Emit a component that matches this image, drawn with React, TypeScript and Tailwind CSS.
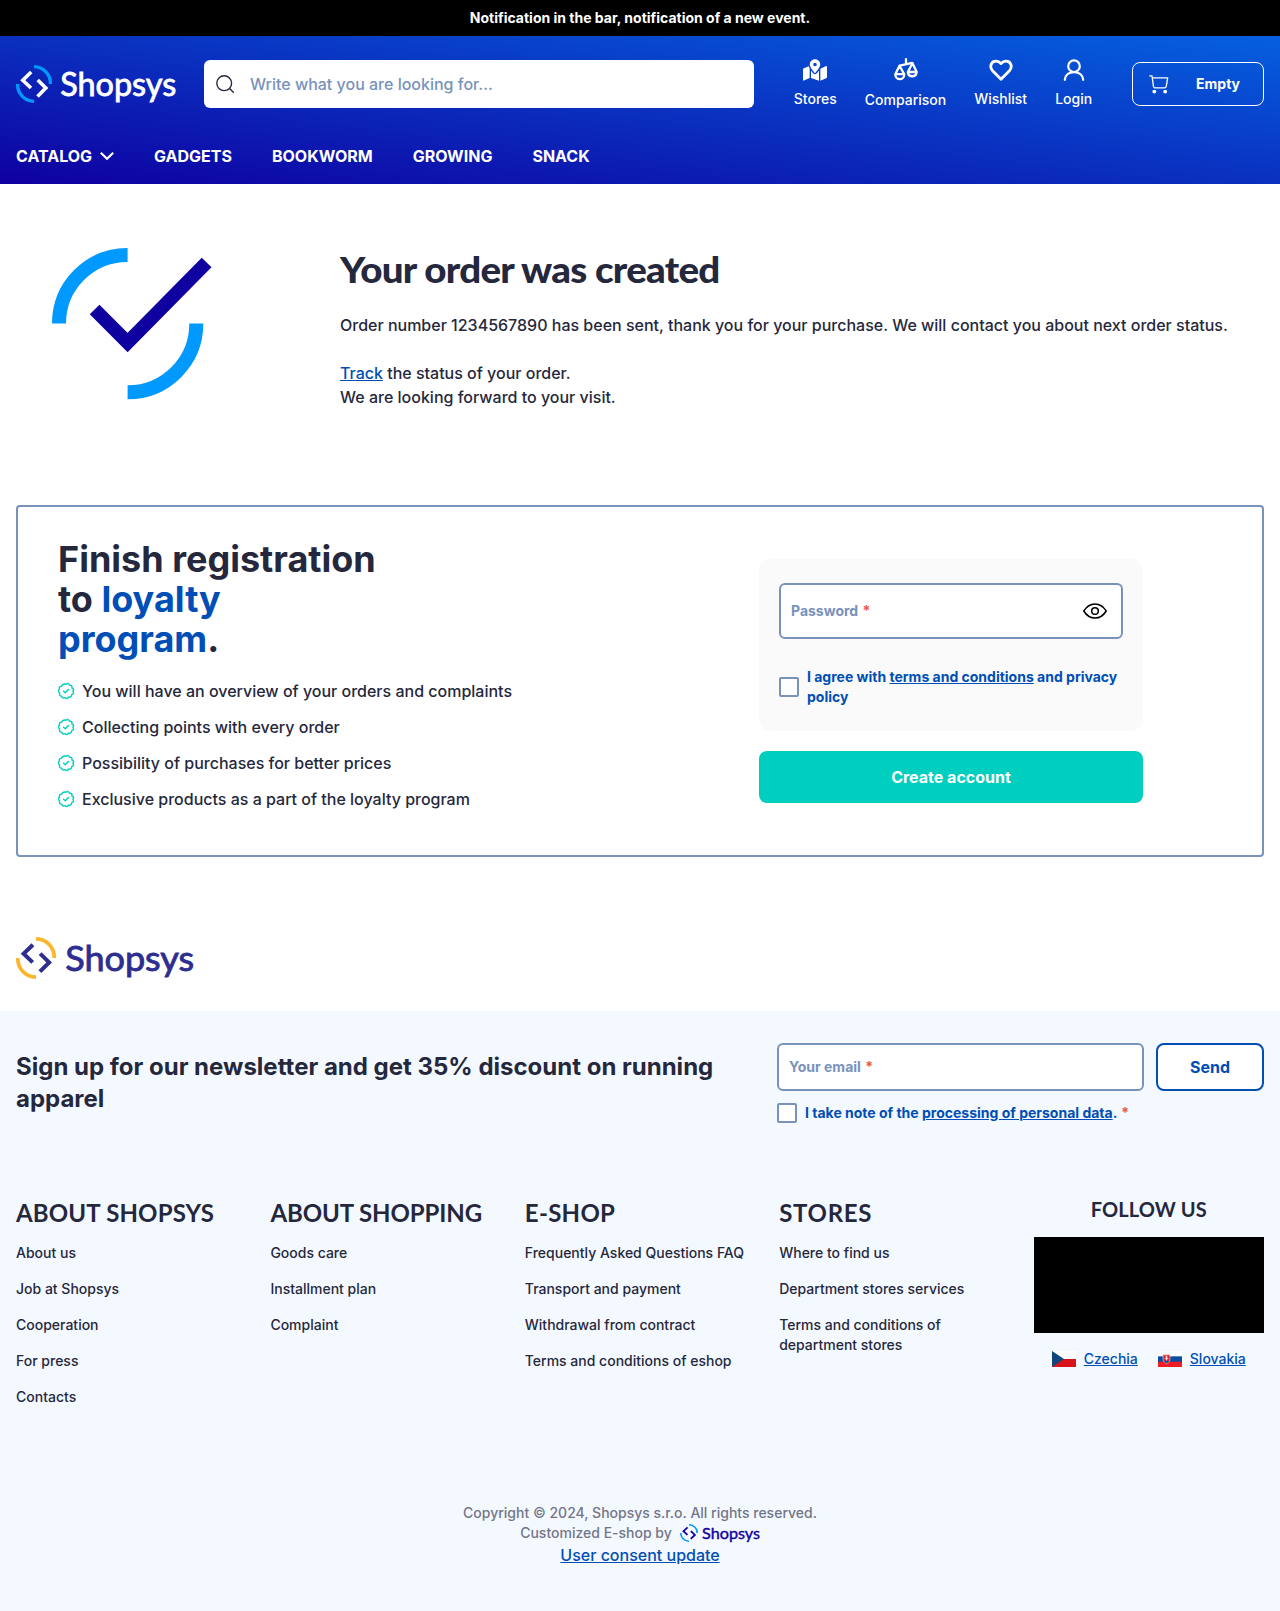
import type { ReactNode } from "react";
import { FaMapMarkedAlt } from "react-icons/fa";

function Logo({ className, arc, ink }: { className: string; arc: string; ink: string }) {
  return (
    <svg className={`overflow-visible ${className}`} viewBox="0 0 160 38" preserveAspectRatio="none" fill="none" aria-label="Shopsys">
      <path d="M18 1.7A16.6 16.6 0 0 1 34.4 19M18 36.3A16.6 16.6 0 0 1 1.6 19" stroke={arc} strokeWidth="3.3" />
      <path d="M15.2 7 6.8 15.2 15 23M21.7 15 29.8 23 21.5 31.4" stroke={ink} strokeWidth="3.6" />
      <text x="44.2" y="30.800" fill={ink} stroke={ink} strokeWidth="0.8" fontFamily="Lato" fontWeight="400" fontSize="32" textLength="116" lengthAdjust="spacingAndGlyphs">Shopsys</text>
    </svg>
  );
}

function ScaleIcon() {
  return (
    <svg className="h-6 w-6" viewBox="0 0 24 24" fill="none" stroke="currentColor" strokeWidth="2.3" strokeLinecap="round" strokeLinejoin="round">
      <path d="M12 1.2V6M5.8 7.6 18.2 4.8" />
      <path d="M5.5 7.8 1.3 16.2A4.5 5 0 0 0 10.3 16.2ZM1.3 16.2H10.3" />
      <path d="M18.5 5.2 13.8 14A4.5 5 0 0 0 22.7 14ZM13.8 14H22.7" />
    </svg>
  );
}

function HeartIcon() {
  return (
    <svg className="h-6 w-6" viewBox="0 0 24 24" fill="none" stroke="currentColor" strokeWidth="2.8" strokeLinejoin="round">
      <path d="M12 21.2 3.6 12.7C0 8.7 2.2 3.2 6.8 3.1 9.4 3 11 4.4 12 5.6 13 4.4 14.6 3 17.2 3.1 21.8 3.2 24 8.7 20.4 12.7Z" />
    </svg>
  );
}

function UserIcon() {
  return (
    <svg className="h-6 w-6" viewBox="0 0 24 24" fill="none" stroke="currentColor" strokeWidth="2.2" strokeLinecap="round">
      <circle cx="12" cy="8.2" r="5.8" />
      <path d="M2.8 21.8C3.2 17 7 14.2 12 14.2S20.8 17 21.2 21.8" />
    </svg>
  );
}

function CartIcon() {
  return (
    <svg className="h-[19px] w-5" viewBox="0 0 20 19" fill="none" stroke="currentColor" strokeWidth="1.3" strokeLinecap="round" strokeLinejoin="round">
      <path d="M.8.9H3L4.5 11.7Q4.8 12.9 6 12.9H15.5Q16.9 12.9 17.2 11.6L18.7 2.8H3.4" />
      <circle cx="5.3" cy="16.6" r="1.3" fill="currentColor" />
      <circle cx="16.2" cy="16.6" r="1.3" fill="currentColor" />
    </svg>
  );
}

function SealIcon() {
  return (
    <svg className="h-4 w-4 shrink-0 overflow-visible" viewBox="0 0 16 16" fill="none" stroke="#00cfbf" strokeWidth="1.4" strokeLinecap="round" strokeLinejoin="round">
      <path d="M8 1.2Q10.4-.6 11.6 2.2 14.6 2 13.9 5 16.7 6.2 14.9 8.2 16.4 10.9 13.6 11.7 13.7 14.7 10.7 14 9 16.5 7.2 14.7 4.3 15.9 3.7 13.2.8 13 1.7 10.1-.7 8.3 1.4 6.3.6 3.4 3.5 3.2 4.4.3 8 1.2Z" />
      <path d="M5.6 8.2 7.3 9.7 10.4 6.5" strokeWidth="1.5" />
    </svg>
  );
}

function HeaderLink({ icon, label, className }: { icon: ReactNode; label: string; className: string }) {
  return (
    <a className={`flex flex-col items-center text-sm font-medium ${className}`} href="#">
      {icon}
      {label}
    </a>
  );
}

const benefits = [
  "You will have an overview of your orders and complaints",
  "Collecting points with every order",
  "Possibility of purchases for better prices",
  "Exclusive products as a part of the loyalty program",
];

const columns = [
  { title: "ABOUT SHOPSYS", tracking: "tracking-[0.16px]", links: ["About us", "Job at Shopsys", "Cooperation", "For press", "Contacts"] },
  { title: "ABOUT SHOPPING", tracking: "tracking-[-0.1px]", links: ["Goods care", "Installment plan", "Complaint"] },
  { title: "E-SHOP", tracking: "tracking-[0.3px]", links: ["Frequently Asked Questions FAQ", "Transport and payment", "Withdrawal from contract", "Terms and conditions of eshop"] },
  { title: "STORES", tracking: "tracking-[0.7px]", links: ["Where to find us", "Department stores services", "Terms and conditions of department stores"] },
];

export default function App() {
  return (
    <div className="flex h-[1611px] flex-col bg-white font-['Inter',sans-serif] text-base font-medium text-[#25283d]">
      <div className="flex h-9 shrink-0 items-center justify-center bg-black text-sm font-bold text-white">
        Notification in the bar, notification of a new event.
      </div>

      <header className="h-[148px] shrink-0 bg-linear-to-tr/srgb from-[#0f00a0] to-[#0560df] px-4 pt-5 text-white">
        <div className="flex h-[56px] items-center">
          <Logo className="h-[38px] w-[160px]" arc="#0099ff" ink="#ffffff" />
          <div className="ml-7 flex h-12 w-[550px] items-center rounded-md bg-white pl-3">
            <svg className="h-[18px] w-[18px]" viewBox="0 0 18 18" fill="none" stroke="#25283d" strokeWidth="1.4" strokeLinecap="round">
              <circle cx="8.2" cy="8.2" r="7.4" />
              <path d="m13.6 13.6 3.7 3.7" />
            </svg>
            <span className="ml-4 text-[#7892bc]">Write what you are looking for...</span>
          </div>
          <nav className="ml-[39.75px] flex gap-7">
            <HeaderLink className="gap-[7px]" icon={<FaMapMarkedAlt className="h-6 w-6" />} label="Stores" />
            <HeaderLink className="gap-2" icon={<ScaleIcon />} label="Comparison" />
            <HeaderLink className="gap-[7px]" icon={<HeartIcon />} label="Wishlist" />
            <HeaderLink className="gap-[7px]" icon={<UserIcon />} label="Login" />
          </nav>
          <div className="ml-auto flex h-11 w-[132px] items-center rounded-lg border border-white pr-[23px] pl-4">
            <CartIcon />
            <span className="ml-auto text-sm font-bold">Empty</span>
          </div>
        </div>
        <nav className="mt-8 flex h-6 items-center gap-10 font-bold">
          <span className="flex items-center gap-2">
            CATALOG
            <svg className="h-2 w-[14px]" viewBox="0 0 14 8" fill="none" stroke="currentColor" strokeWidth="2.2">
              <path d="m.8.8 6.2 6 6.2-6" />
            </svg>
          </span>
          <span>GADGETS</span>
          <span>BOOKWORM</span>
          <span>GROWING</span>
          <span>SNACK</span>
        </nav>
      </header>

      <section className="flex h-[321px] shrink-0 pt-16 pl-[52px]">
        <svg className="h-[152px] w-[160px] shrink-0" viewBox="0 0 160 152" fill="none" strokeWidth="14">
          <path d="M75.6 7A68.5 68.5 0 0 0 7 75.6M75.6 144.3A68.5 68.5 0 0 0 144.3 75.6" stroke="#0099ff" />
          <path d="m42.6 61.5 33 33 79-80" stroke="#0f00a0" strokeWidth="13.7" />
        </svg>
        <div className="ml-32">
          <h1 className="-mt-[2px] w-fit origin-left scale-x-[1.07] font-['Lato'] text-[36px] leading-[46px] font-black tracking-[-0.68px]">Your order was created</h1>
          <p className="mt-[21px] leading-6">Order number 1234567890 has been sent, thank you for your purchase. We will contact you about next order status.</p>
          <p className="mt-6 leading-6">
            <a className="text-[#004eb6] underline" href="#">Track</a> the status of your order.
            <br />
            We are looking forward to your visit.
          </p>
        </div>
      </section>

      <section className="mx-4 flex h-[352px] shrink-0 rounded border-2 border-[#7892bc] pl-10">
        <div className="w-[701px] pt-8">
          <h2 className="w-[330px] text-[36px] leading-10 font-bold">
            Finish registration to <span className="text-[#004eb6]">loyalty program</span>.
          </h2>
          <ul className="mt-5 flex flex-col gap-3">
            {benefits.map((b) => (
              <li key={b} className="flex h-6 items-center gap-2">
                <SealIcon />
                {b}
              </li>
            ))}
          </ul>
        </div>
        <form className="w-96 pt-[52px]">
          <div className="rounded-xl bg-[#fafafa] px-5 py-6">
            <div className="flex h-14 items-center justify-between rounded-md border-2 border-[#7892bc] bg-white pr-[14px] pl-[10px]">
              <span className="text-sm font-bold text-[#7892bc]">
                Password <span className="ml-px text-[#ec5353]">*</span>
              </span>
              <svg className="h-4 w-6" viewBox="0 0 24 16" fill="none" stroke="#000" strokeWidth="1.5" strokeLinejoin="round">
                <path d="M.8 8C3.5 3.6 7.3.9 12 .9S20.5 3.6 23.2 8C20.5 12.4 16.7 15.1 12 15.1S3.5 12.4.8 8Z" />
                <circle cx="12" cy="8" r="3.3" />
              </svg>
            </div>
            <div className="mt-7 flex items-center gap-2">
              <span className="h-5 w-5 shrink-0 rounded-xs border-2 border-[#7892bc] bg-white" />
              <span className="text-sm leading-5 font-bold text-[#004eb6]">
                I agree with <a className="underline" href="#">terms and conditions</a> and privacy policy
              </span>
            </div>
          </div>
          <button type="button" className="mt-5 h-[52px] w-full rounded-lg bg-[#00cfbf] font-bold text-white">Create account</button>
        </form>
      </section>

      <div className="h-[154px] shrink-0 px-4 pt-20">
        <Logo className="h-[42px] w-[178px]" arc="#fdb62b" ink="#2d2e8f" />
      </div>

      <footer className="flex grow flex-col bg-[#f4f9ff] px-4 pt-8">
        <div className="flex h-[154px]">
          <h3 className="w-[737px] pt-2 text-2xl leading-8 font-bold">Sign up for our newsletter and get 35% discount on running apparel</h3>
          <div className="ml-6 w-[487px]">
            <div className="flex gap-3">
              <div className="flex h-12 w-[367px] items-center rounded-md border-2 border-[#7892bc] bg-white pl-[10px] text-sm font-bold whitespace-pre text-[#7892bc]">
                Your email <span className="ml-px text-[#ec5353]">*</span>
              </div>
              <button type="button" className="h-12 w-[108px] rounded-lg border-2 border-[#004eb6] bg-white font-bold text-[#004eb6]">Send</button>
            </div>
            <div className="mt-3 flex items-center gap-2">
              <span className="h-5 w-5 shrink-0 rounded-xs border-2 border-[#7892bc] bg-white" />
              <span className="text-sm leading-5 font-bold text-[#004eb6]">
                I take note of the <a className="underline" href="#">processing of personal data</a>. <span className="ml-px text-[#ec5353]">*</span>
              </span>
            </div>
          </div>
        </div>

        <div className="grid h-[306px] shrink-0 grid-cols-5 gap-6">
          {columns.map((c) => (
            <div key={c.title}>
              <h4 className={`font-['Lato'] text-2xl leading-[31px] font-bold whitespace-nowrap ${c.tracking}`}>{c.title}</h4>
              <ul className="mt-[15px] flex flex-col gap-4 text-sm leading-5">
                {c.links.map((l) => (
                  <li key={l}>{l}</li>
                ))}
              </ul>
            </div>
          ))}
          <div className="flex flex-col items-center">
            <h4 className="-mt-px font-['Lato'] text-xl leading-[26px] font-bold tracking-[0.1px]">FOLLOW US</h4>
            <div className="mt-[15px] h-24 w-full bg-black" />
            <div className="mt-4 flex h-5 gap-5 text-sm leading-5 text-[#004eb6]">
              <a className="flex items-center gap-2 underline" href="#">
                <svg className="h-4 w-6" viewBox="0 0 24 16">
                  <path d="M0 0h24v8H0z" fill="#fff" />
                  <path d="M0 8h24v8H0z" fill="#d7141a" />
                  <path d="M0 0l12 8-12 8z" fill="#11457e" />
                </svg>
                Czechia
              </a>
              <a className="flex items-center gap-2 underline" href="#">
                <svg className="h-4 w-6" viewBox="0 0 24 16">
                  <path d="M0 0h24v16H0z" fill="#ee1c25" />
                  <path d="M0 0h24v10.67H0z" fill="#0b4ea2" />
                  <path d="M0 0h24v5.33H0z" fill="#fff" />
                  <path d="M5 3.8h7v4.6c0 2.2-1.8 3.4-3.5 4.2C6.8 11.8 5 10.6 5 8.4z" fill="#ee1c25" stroke="#fff" strokeWidth=".5" />
                  <path d="M8.5 4.8v5M7.3 6h2.4M6.8 7.7h3.4" stroke="#fff" strokeWidth=".8" />
                  <path d="M6 10.2q2.5-1.2 5 0-1 1.3-2.5 2-1.5-.7-2.5-2z" fill="#0b4ea2" />
                </svg>
                Slovakia
              </a>
            </div>
          </div>
        </div>

        <div className="flex flex-col items-center text-sm leading-5 text-[#727588]">
          <span>Copyright © 2024, Shopsys s.r.o. All rights reserved.</span>
          <span className="flex items-center gap-2">
            Customized E-shop by
            <Logo className="h-[18px] w-20" arc="#0099ff" ink="#0f00a0" />
          </span>
          <a className="text-base leading-6 text-[#004eb6] underline" href="#">User consent update</a>
        </div>
      </footer>
    </div>
  );
}
